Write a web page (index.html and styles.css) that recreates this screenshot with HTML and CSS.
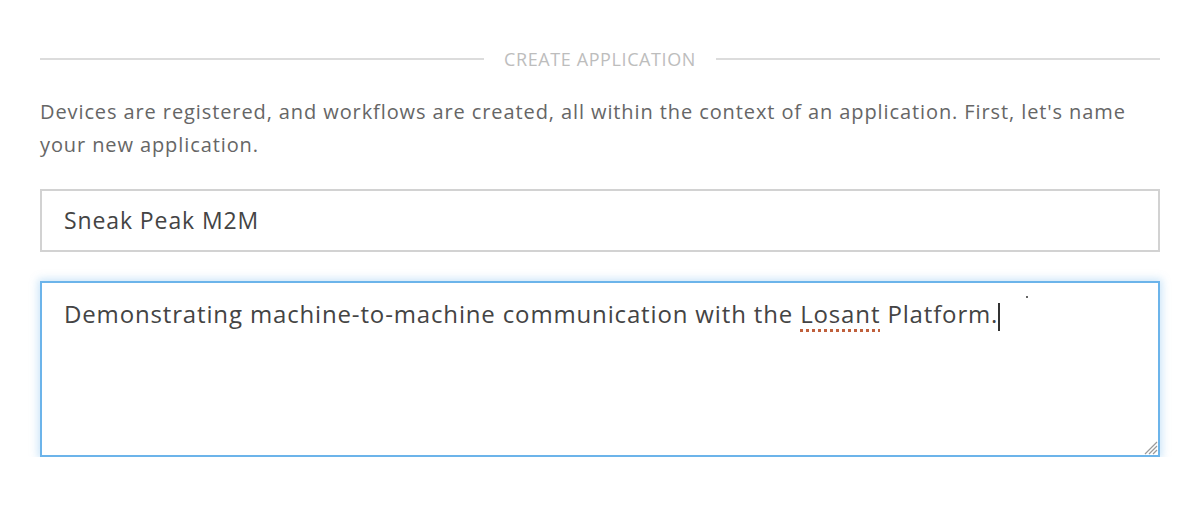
FILE: index.html
```html
<!DOCTYPE html>
<html>
<head>
<meta charset="utf-8">
<link rel="stylesheet" href="styles.css">
</head>
<body>
<div class="page">
  <div class="divider">
    <span class="rule"></span>
    <span class="label">CREATE APPLICATION</span>
    <span class="rule"></span>
  </div>
  <p class="intro">Devices are registered, and workflows are created, all within the context of an application. First, let's name your new application.</p>
  <div class="field">Sneak Peak M2M</div>
  <div class="area">
    <span class="text">Demonstrating machine-to-machine communication with the <span class="spell">Losant</span> Platform.</span><span class="caret"></span>
    <span class="speck"></span>
    <svg class="grip" width="16" height="16" viewBox="0 0 16 16"><path d="M15 3 L3 15 M15 7 L7 15 M15 11 L11 15" stroke="#9a9a9a" stroke-width="1.2"/></svg>
  </div>
</div>
</body>
</html>
```
FILE: styles.css
```css
html, body { margin: 0; padding: 0; background: #fff; }
body { font-family: "Open Sans", "Noto Sans", sans-serif; }
.page { width: 1120px; margin: 0 40px; padding-top: 48px; }
.divider { display: flex; align-items: center; gap: 20px; height: 22px; }
.rule { flex: 1; height: 2px; background: #dcdcdc; }
.label { color: #bdbdbd; font-size: 18px; letter-spacing: 0.6px; }
.intro { margin: 25px 0 0; color: #666; font-size: 20px; letter-spacing: 0.9px; line-height: 33px; }
.field { margin-top: 28px; height: 59px; border: 2px solid #d2d2d2; padding: 0 22px; font-size: 23px; letter-spacing: 0.9px; line-height: 59px; color: #444; }
.area { position: relative; margin-top: 29px; height: 172px; border: 2px solid #6cb4ea; padding: 0 22px; font-size: 24px; letter-spacing: 0.85px; color: #444; line-height: 62px; box-shadow: 0 0 8px 2px rgba(108,180,234,0.35); }
.spell { text-decoration: underline dotted #c0603c; text-decoration-thickness: 3px; text-underline-offset: 6px; }
.caret { display: inline-block; width: 2px; height: 28px; background: #333; vertical-align: middle; margin-left: 0; }
.speck { position: absolute; left: 984px; top: 13px; width: 2px; height: 2px; background: #666; }
.grip { position: absolute; right: 0; bottom: 0; }
```
